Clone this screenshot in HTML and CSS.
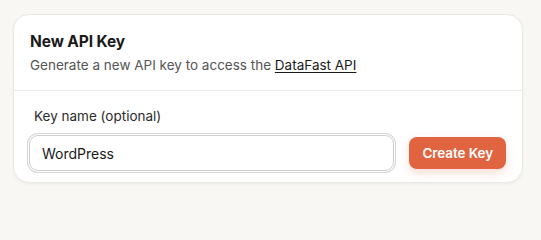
FILE: index.html
```html
<!DOCTYPE html>
<html>
<head>
<meta charset="utf-8">
<link rel="stylesheet" href="styles.css">
</head>
<body>
<div class="card">
  <div class="card-header">
    <h2 class="title">New API Key</h2>
    <p class="subtitle">Generate a new API key to access the <a href="#" class="link">DataFast API</a></p>
  </div>
  <div class="card-body">
    <label class="label" for="keyname">Key name (optional)</label>
    <div class="row">
      <input id="keyname" class="input" type="text" value="WordPress">
      <button class="btn">Create Key</button>
    </div>
  </div>
</div>
</body>
</html>
```
FILE: styles.css
```css
html, body {
  margin: 0;
  padding: 0;
  background: #f9f7f4;
}
body {
  padding: 14px 18px 18px 13px;
  font-family: Inter, "DejaVu Sans", sans-serif;
  color: #1c1c1c;
}
.card {
  background: #fff;
  border: 1px solid #ebe9e6;
  border-radius: 16px;
  box-shadow: 0 1px 3px rgba(0,0,0,0.05);
}
.card-header {
  padding: 17px 16px 15px;
  border-bottom: 1px solid #ececec;
}
.title {
  margin: 0;
  font-size: 15.5px;
  line-height: 20px;
  font-weight: 700;
  color: #1a1a1a;
  letter-spacing: -0.1px;
}
.subtitle {
  margin: 3px 0 0;
  font-size: 13.5px;
  line-height: 20px;
  color: #555;
}
.link {
  color: #1a1a1a;
  text-decoration: underline;
  text-underline-offset: 2px;
}
.card-body {
  padding: 15px 16px 11px 15px;
}
.label {
  display: block;
  margin-left: 5px;
  font-size: 13.5px;
  line-height: 20px;
  color: #2a2a2a;
}
.row {
  display: flex;
  align-items: center;
  gap: 15px;
  margin-top: 9px;
}
.input {
  flex: 1;
  box-sizing: border-box;
  height: 36px;
  padding: 0 12px;
  border: 1px solid #cfcfcf;
  border-radius: 9px;
  box-shadow: 0 0 0 1px #fff, 0 0 0 2px #d6d6d6;
  font-family: inherit;
  font-size: 14px;
  color: #1a1a1a;
  outline: none;
  background: #fff;
}
.btn {
  height: 32px;
  padding: 0 13px;
  border: none;
  border-radius: 8px;
  background: #e0643f;
  color: #fff;
  font-family: inherit;
  font-size: 13.5px;
  font-weight: 600;
  letter-spacing: -0.1px;
  box-shadow: 0 4px 10px rgba(224,100,63,0.22);
}
```
